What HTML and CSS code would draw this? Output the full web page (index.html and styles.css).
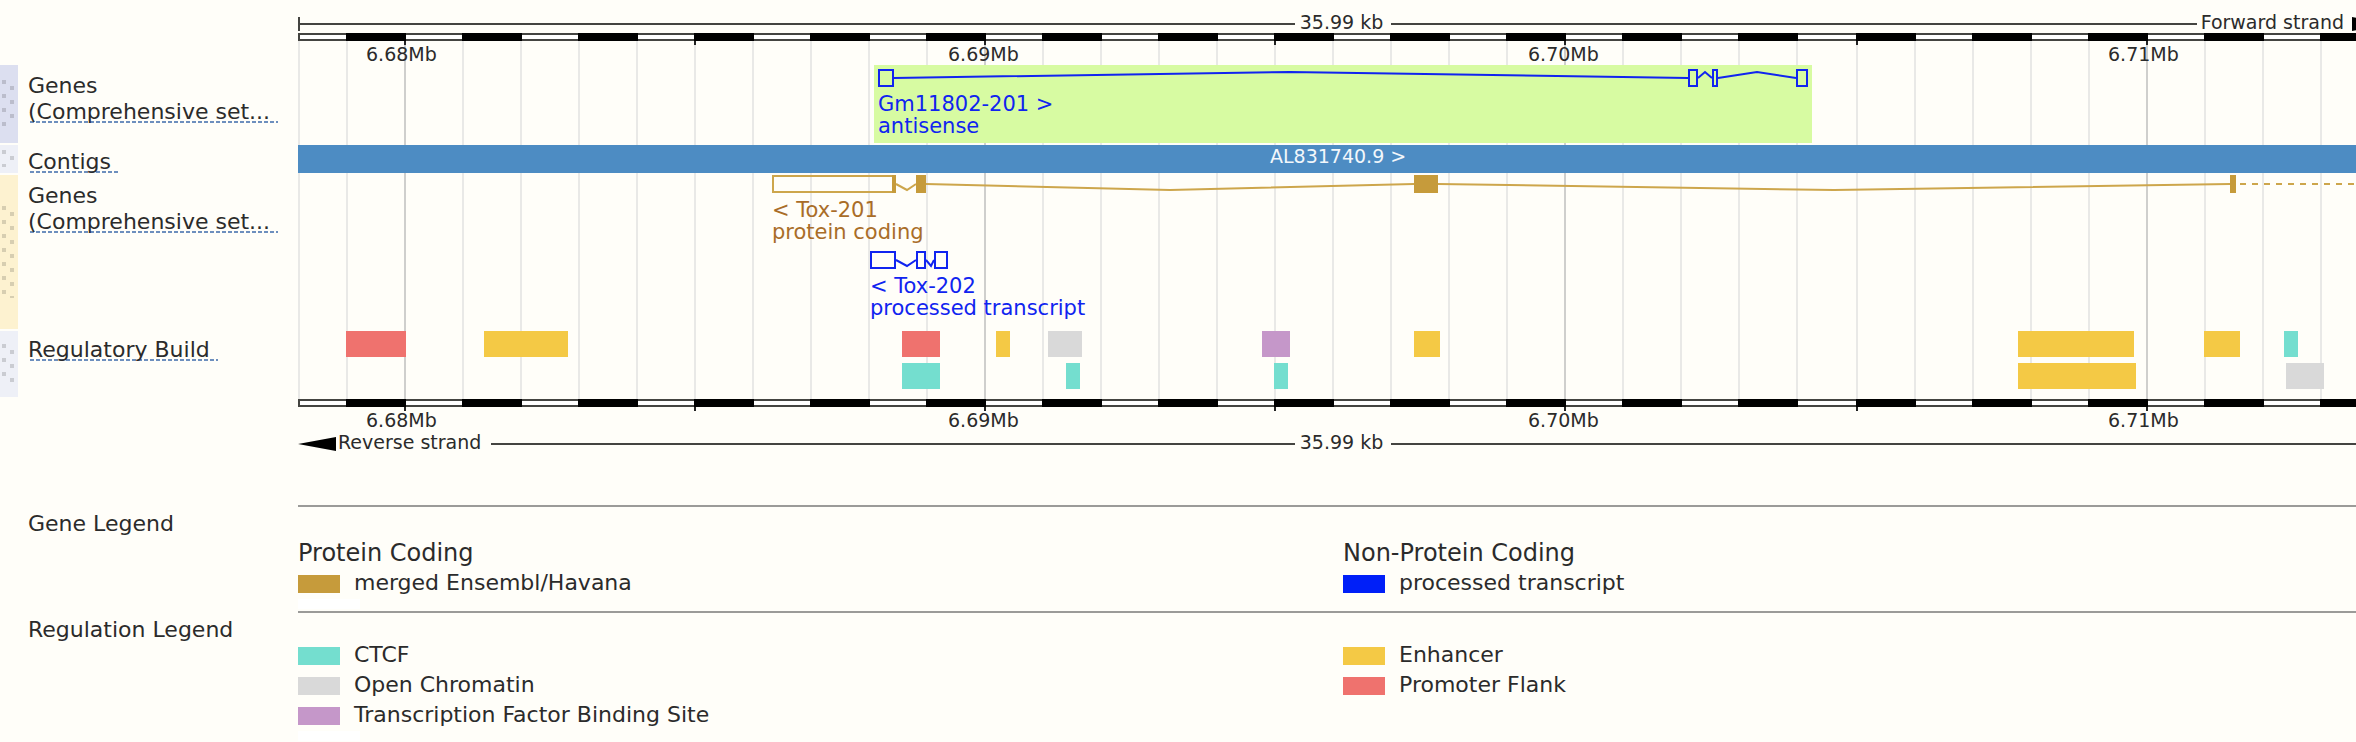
FILE: index.html
```html
<!DOCTYPE html>
<html lang="en">
<head>
<meta charset="utf-8">
<title>Region view: 6.68Mb – 6.71Mb</title>
<link rel="stylesheet" href="styles.css">
</head>
<body>
<main class="view">

  <div class="row">
    <div class="lane lane--right"><div class="span strand">
      <div class="strand-part"><i class="cap"></i><i class="rule"></i></div>
      <span class="size">35.99 kb</span>
      <div class="strand-part"><i class="rule"></i><span class="forward">Forward strand</span>
        <svg class="arrow arrow--forward" viewBox="0 0 36 14"><path d="M0 0L36 7L0 14Z"/></svg></div>
    </div></div>
  </div>

  <section class="map">
    <div class="lane grid-lane"><div class="span">
      <svg class="plot" viewBox="0 0 2090 10" preserveAspectRatio="none">
        <path class="grid-minor" d="M1 0V10M49 0V10M165 0V10M223 0V10M281 0V10M339 0V10M397 0V10M455 0V10M513 0V10M571 0V10M629 0V10M745 0V10M803 0V10M861 0V10M919 0V10M977 0V10M1035 0V10M1093 0V10M1151 0V10M1209 0V10M1325 0V10M1383 0V10M1441 0V10M1499 0V10M1559 0V10M1617 0V10M1675 0V10M1733 0V10M1791 0V10M1907 0V10M1965 0V10M2023 0V10M2081 0V10"/>
        <path class="grid-major" d="M107 0V10M687 0V10M1267 0V10M1849 0V10"/>
      </svg>
    </div></div>

    <div class="row">
      <div class="lane lane--right"><div class="span axis">
        <svg class="ruler" viewBox="0 0 2090 12" preserveAspectRatio="none">
          <rect class="ruler-frame" width="2090" height="8"/>
          <rect class="ruler-gap" x="2" y="2" width="2086" height="4"/>
          <path class="ruler-block" d="M48 4H108M164 4H224M280 4H340M396 4H456M512 4H572M628 4H688M744 4H804M860 4H920M976 4H1036M1092 4H1152M1208 4H1268M1324 4H1384M1440 4H1500M1558 4H1618M1674 4H1734M1790 4H1850M1906 4H1966M2022 4H2082"/>
          <path class="ruler-tick" d="M107 8V12M397 8V12M687 8V12M977 8V12M1267 8V12M1559 8V12M1849 8V12"/>
        </svg>
        <span class="tick" style="--x:68">6.68Mb</span>
        <span class="tick" style="--x:650">6.69Mb</span>
        <span class="tick" style="--x:1230">6.70Mb</span>
        <span class="tick" style="--x:1810">6.71Mb</span>
      </div></div>
    </div>

    <div class="tracks">
      <div class="row">
        <div class="handle handle--forward"><svg class="grip" viewBox="0 0 18 46" height="46"><path d="M4 0V46M12 6V46"/></svg></div>
        <div class="label"><span>Genes</span><span class="menu">(Comprehensive set...</span></div>
        <div class="lane"><div class="span">
          <svg class="features" viewBox="0 0 2090 78" height="78" preserveAspectRatio="none">
            <rect class="highlight" x="576" y="0" width="938" height="78"/>
            <path class="outline transcript" d="M596 13L992 7L1390 13M1400 13L1407 7L1414 13M1420 13L1459 7L1498 13"/>
            <rect class="outline transcript" x="581" y="5" width="14" height="16"/>
            <rect class="outline transcript" x="1391" y="5" width="8" height="16"/>
            <rect class="outline transcript" x="1415" y="5" width="4" height="16"/>
            <rect class="outline transcript" x="1499" y="5" width="10" height="16"/>
          </svg>
          <p class="name name--transcript name--first" style="--x:580">Gm11802-201 &gt;<br>antisense</p>
        </div></div>
      </div>

      <div class="row">
        <div class="handle handle--neutral handle--short"><svg class="grip" viewBox="0 0 18 17" height="17"><path d="M4 0V17M12 6V17"/></svg></div>
        <div class="label label--contigs"><span class="menu">Contigs</span></div>
        <div class="lane"><div class="span contig"><span class="contig-name" style="--x:972">AL831740.9 &gt;</span></div></div>
      </div>

      <div class="row">
        <div class="handle handle--reverse"><svg class="grip" viewBox="0 0 18 92" height="92"><path d="M4 0V92M12 6V92"/></svg></div>
        <div class="label"><span>Genes</span><span class="menu">(Comprehensive set...</span></div>
        <div class="lane"><div class="span">
          <svg class="features" viewBox="0 0 2090 154" height="154" preserveAspectRatio="none">
            <path class="outline merged-line" d="M598 9L609 15L618 9M628 9L872 15L1116 9M1140 9L1536 15L1932 9"/>
            <path class="outline merged-line dashed" d="M1942 9H2090"/>
            <rect class="outline merged-line" x="475" y="1" width="122" height="16"/>
            <path class="merged" d="M594 0H598V18H594ZM618 0H628V18H618ZM1116 0H1140V18H1116ZM1932 0H1938V18H1932Z"/>
            <path class="outline transcript" d="M598 85L609 91L618 85M628 85L633 91L636 85"/>
            <rect class="outline transcript" x="573" y="77" width="24" height="16"/>
            <rect class="outline transcript" x="619" y="77" width="8" height="16"/>
            <rect class="outline transcript" x="637" y="77" width="12" height="16"/>
          </svg>
          <p class="name name--coding name--second" style="--x:474">&lt; Tox-201<br>protein coding</p>
          <p class="name name--transcript name--third" style="--x:572">&lt; Tox-202<br>processed transcript</p>
        </div></div>
      </div>

      <div class="row">
        <div class="handle handle--neutral"><svg class="grip" viewBox="0 0 18 38" height="38"><path d="M4 0V38M12 6V38"/></svg></div>
        <div class="label label--regulatory"><span class="menu">Regulatory Build</span></div>
        <div class="lane"><div class="span">
          <svg class="features" viewBox="0 0 2090 66" height="66" preserveAspectRatio="none">
            <path class="promoter" d="M48 0H108V26H48ZM604 0H642V26H604Z"/>
            <path class="enhancer" d="M186 0H270V26H186ZM698 0H712V26H698ZM1116 0H1142V26H1116ZM1720 0H1836V26H1720ZM1720 32H1838V58H1720ZM1906 0H1942V26H1906Z"/>
            <path class="ctcf" d="M604 32H642V58H604ZM768 32H782V58H768ZM976 32H990V58H976ZM1986 0H2000V26H1986Z"/>
            <path class="chromatin" d="M750 0H784V26H750ZM1988 32H2026V58H1988Z"/>
            <path class="tfbs" d="M964 0H992V26H964Z"/>
          </svg>
        </div></div>
      </div>
    </div>

    <div class="row">
      <div class="lane lane--right"><div class="span axis">
        <svg class="ruler" viewBox="0 0 2090 12" preserveAspectRatio="none">
          <rect class="ruler-frame" width="2090" height="8"/>
          <rect class="ruler-gap" x="2" y="2" width="2086" height="4"/>
          <path class="ruler-block" d="M48 4H108M164 4H224M280 4H340M396 4H456M512 4H572M628 4H688M744 4H804M860 4H920M976 4H1036M1092 4H1152M1208 4H1268M1324 4H1384M1440 4H1500M1558 4H1618M1674 4H1734M1790 4H1850M1906 4H1966M2022 4H2082"/>
          <path class="ruler-tick" d="M107 8V12M397 8V12M687 8V12M977 8V12M1267 8V12M1559 8V12M1849 8V12"/>
        </svg>
        <span class="tick" style="--x:68">6.68Mb</span>
        <span class="tick" style="--x:650">6.69Mb</span>
        <span class="tick" style="--x:1230">6.70Mb</span>
        <span class="tick" style="--x:1810">6.71Mb</span>
      </div></div>
    </div>
  </section>

  <div class="row">
    <div class="lane lane--right"><div class="span strand strand--reverse">
      <div class="strand-part"><svg class="arrow" viewBox="0 0 38 14"><path d="M38 0L0 7L38 14Z"/></svg><span class="reverse">Reverse strand</span><i class="rule"></i></div>
      <span class="size">35.99 kb</span>
      <div class="strand-part"><i class="rule"></i><i class="cap"></i></div>
    </div></div>
  </div>

  <section class="row legend legend--genes">
    <h2 class="legend-title">Gene Legend</h2>
    <div class="lane legend-body"><div class="span columns">
      <div class="column">
        <h3 class="group">Protein Coding</h3>
        <ul class="items"><li class="item"><svg class="swatch merged"><rect width="42" height="18"/></svg>merged Ensembl/Havana</li></ul>
        <div class="blank"></div>
      </div>
      <div class="column">
        <h3 class="group">Non-Protein Coding</h3>
        <ul class="items"><li class="item"><svg class="swatch processed"><rect width="42" height="18"/></svg>processed transcript</li></ul>
      </div>
    </div></div>
  </section>

  <section class="row legend">
    <h2 class="legend-title">Regulation Legend</h2>
    <div class="lane legend-body"><div class="span columns">
      <div class="column">
        <ul class="items">
          <li class="item"><svg class="swatch ctcf"><rect width="42" height="18"/></svg>CTCF</li>
          <li class="item"><svg class="swatch chromatin"><rect width="42" height="18"/></svg>Open Chromatin</li>
          <li class="item"><svg class="swatch tfbs"><rect width="42" height="18"/></svg>Transcription Factor Binding Site</li>
        </ul>
        <div class="blank"></div>
      </div>
      <div class="column">
        <ul class="items">
          <li class="item"><svg class="swatch enhancer"><rect width="42" height="18"/></svg>Enhancer</li>
          <li class="item"><svg class="swatch promoter"><rect width="42" height="18"/></svg>Promoter Flank</li>
        </ul>
      </div>
    </div></div>
  </section>

</main>
</body>
</html>
```

FILE: styles.css
```css
:root {
  --paper: #fffef9;
  --ink: #2b2b2b;
  --line: #444441;
  --blue: #1024f0;
  --label-width: 298px;
  /* the drawn region runs on past the right edge of the view */
  --overrun: 32px;
}

* { box-sizing: border-box; }

body {
  margin: 0;
  background: var(--paper);
  color: var(--ink);
  font: 22px/24px "DejaVu Sans", Verdana, sans-serif;
}

h2, h3, p, ul { margin: 0; padding: 0; font-weight: normal; }
svg { display: block; }

.view { padding-top: 11px; overflow: hidden; }

/* rows: coloured handle, label, drawing lane */
.row {
  display: grid;
  grid-template-columns: 18px calc(var(--label-width) - 18px) minmax(0, 1fr);
}
.lane { overflow: hidden; min-width: 0; }
.lane--right { grid-column: 3; }
.span { position: relative; width: calc(100% + var(--overrun)); }

/* strand lines */
.strand {
  display: grid;
  grid-template-columns: 1fr auto 1fr;
  align-items: center;
  font-size: 19px;
  line-height: 22px;
}
.strand-part { display: flex; align-items: center; }
.rule { flex: 1; height: 2px; margin-top: 4px; background: var(--line); }
.cap { width: 2px; height: 14px; margin-top: 4px; background: var(--line); }
.size { padding: 0 8px 0 5px; }
.forward { padding: 0 8px 0 4px; }
.reverse { padding: 0 10px 0 2px; }
.arrow { width: 38px; height: 14px; margin-top: 4px; fill: #000; }
.arrow--forward { width: 36px; }

/* map */
.map { position: relative; }
.grid-lane {
  position: absolute;
  z-index: -1;
  top: 8px;
  bottom: 32px;
  left: var(--label-width);
  right: 0;
}
.grid-lane .span { height: 100%; }
.plot { width: 100%; height: 100%; }
.grid-minor, .grid-major { fill: none; stroke-width: 2; }
.grid-minor { stroke: #e9e9e7; }
.grid-major { stroke: #cfcfcd; }

.axis { height: 32px; font-size: 19px; line-height: 22px; }
.ruler { width: 100%; height: 12px; }
.ruler-frame { fill: var(--line); }
.ruler-gap { fill: #fff; }
.ruler-block { stroke: #000; stroke-width: 8; }
.ruler-tick { stroke: #222; stroke-width: 2; }
.tick, .contig-name, .name {
  position: absolute;
  left: calc(var(--x) / 2090 * 100%);
  white-space: nowrap;
}
.tick { top: 10px; }

.tracks { display: grid; gap: 2px; padding-bottom: 2px; }
.handle { padding-top: 15px; }
.handle--short { padding-top: 5px; }
.handle--forward { background: #dcdff0; }
.handle--neutral { background: #eef0f7; }
.handle--reverse { background: #fdf2d0; padding-top: 31px; }
.handle--neutral:not(.handle--short) { padding-top: 13px; }
.grip { width: 18px; }
.grip path { fill: none; stroke: #000; stroke-opacity: .15; stroke-width: 4; stroke-dasharray: 4 10; }

.label {
  display: flex;
  flex-direction: column;
  align-items: flex-start;
  gap: 2px;
  padding: 9px 0 0 10px;
}
.label--contigs { padding-top: 5px; }
.label--regulatory { padding-top: 7px; }
.menu {
  margin-bottom: -1px;
  padding-right: 8px;
  background: repeating-linear-gradient(90deg, #6d8fbe 0 4px, transparent 4px 6px) 2px 22px / 100% 2px no-repeat;
  background-position: 2px 21px;
}

.features { width: 100%; }
.highlight { fill: #d7fba2; }
.outline { fill: none; stroke-width: 2; }
.transcript { stroke: var(--blue); }
.merged-line { stroke: #cda64c; }
.dashed { stroke-dasharray: 6 6; }

.name { font-size: 21px; line-height: 22px; }
.name--transcript { color: var(--blue); }
.name--coding { color: #a96d28; }
.name--first { top: 28px; }
.name--second { top: 24px; }
.name--third { top: 100px; }

.contig { height: 28px; background: #4d8cc3; }
.contig-name { color: #f2f7fb; font-size: 19px; line-height: 22px; }

/* feature and legend colours */
.merged { fill: #c69b3b; }
.processed { fill: #001ff8; }
.promoter { fill: #ef726e; }
.enhancer { fill: #f4c945; }
.ctcf { fill: #74decf; }
.chromatin { fill: #d9d9d9; }
.tfbs { fill: #c597c9; }

/* legends */
.strand--reverse { margin-bottom: 52px; }
.legend-title { grid-column: 2; padding: 7px 0 0 10px; font-size: 22px; }
.legend-body { border-top: 2px solid #9b9b99; padding-top: 30px; }
.legend--genes .legend-body { padding: 32px 0 2px; }
.columns { display: grid; grid-template-columns: 1fr 1fr; }
.group { margin-bottom: 4px; font-size: 24px; line-height: 28px; }
.items { display: grid; gap: 6px; list-style: none; }
.item { display: flex; align-items: center; gap: 14px; }
.swatch { width: 42px; height: 18px; margin-top: 2px; }
.blank { width: 62px; height: 10px; margin-top: 4px; background: #fff; }
```
